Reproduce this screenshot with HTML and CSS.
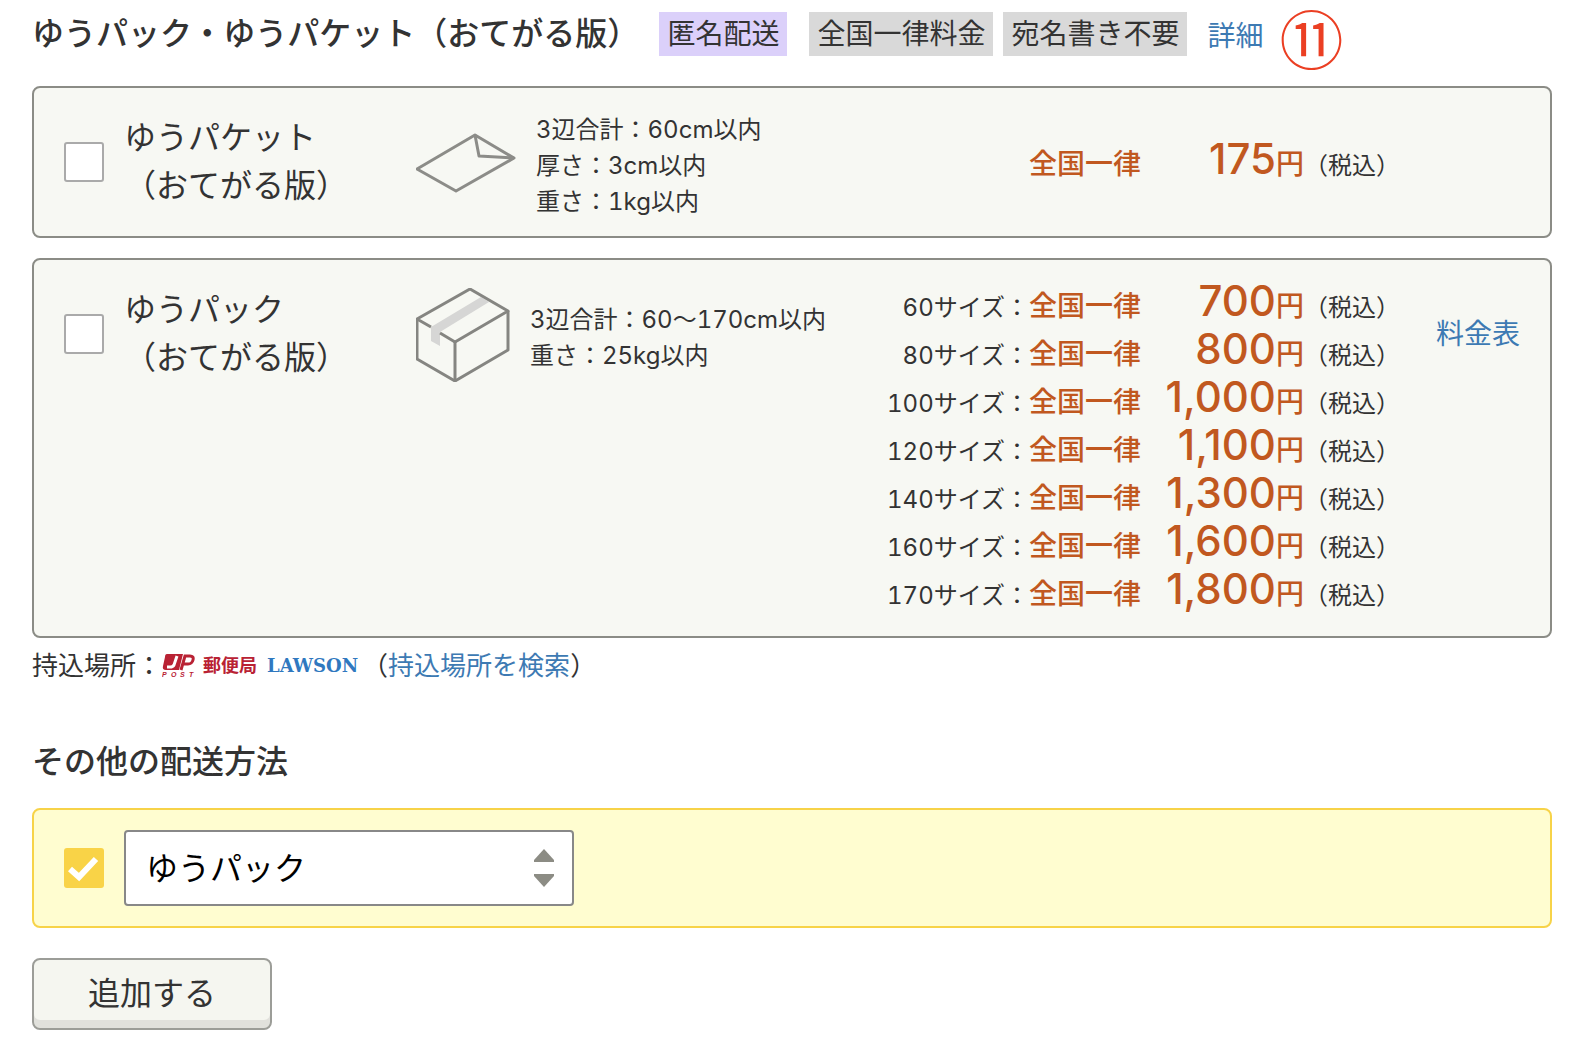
FILE: index.html
```
<!DOCTYPE html>
<html lang="ja">
<head>
  <meta charset="UTF-8">
  <title>配送方法</title>
  <link rel="stylesheet" href="styles.css">
</head>
<body>
  <main class="page">

    <section>
      <div class="heading-row">
        <h2 class="heading">ゆうパック・ゆうパケット（おてがる版）</h2>
        <div class="badges">
          <span class="badge badge-private">匿名配送</span>
          <span class="badge">全国一律料金</span>
          <span class="badge">宛名書き不要</span>
        </div>
        <a class="detail-link" href="#">詳細</a>
        <span class="step">⑪</span>
      </div>

      <div class="card">
        <input class="check" type="checkbox" id="yupacket">
        <label class="name" for="yupacket">ゆうパケット<br>（おてがる版）</label>
        <div class="icon">
          <svg width="100" height="94" viewBox="0 0 100 94" fill="none" stroke="#8c8c88" stroke-width="3" stroke-linejoin="round">
            <path d="M1 53 L59 19 L98 42 L40 75 Z"/>
            <path d="M59 19 L63 40 L98 42"/>
          </svg>
        </div>
        <div class="spec">
          <p>3辺合計：60cm以内<br>厚さ：3cm以内<br>重さ：1kg以内</p>
        </div>
        <table class="prices prices-single">
          <tr><th class="size"></th><td class="flat">全国一律</td><td class="amount"><b>175</b>円</td><td class="tax">（税込）</td></tr>
        </table>
        <div class="more"></div>
      </div>

      <div class="card">
        <input class="check" type="checkbox" id="yupack">
        <label class="name" for="yupack">ゆうパック<br>（おてがる版）</label>
        <div class="icon">
          <svg width="94" height="94" viewBox="0 0 94 94" fill="none" stroke-linejoin="round">
            <path d="M15 39 L65 9 L73 14 L24 44 V58 L15 53 Z" fill="#d6d6d5"/>
            <g stroke="#858581" stroke-width="3">
              <path d="M15 39 L1 31 L54 1 L92 23 L39 54 L24 45"/>
              <path d="M1 31 V71 L39 93 L92 62 V23"/>
              <path d="M39 54 V93"/>
            </g>
          </svg>
        </div>
        <div class="spec">
          <p>3辺合計：60〜170cm以内<br>重さ：25kg以内</p>
        </div>
        <table class="prices">
          <tr><th class="size">60サイズ：</th><td class="flat">全国一律</td><td class="amount"><b>700</b>円</td><td class="tax">（税込）</td></tr>
          <tr><th class="size">80サイズ：</th><td class="flat">全国一律</td><td class="amount"><b>800</b>円</td><td class="tax">（税込）</td></tr>
          <tr><th class="size">100サイズ：</th><td class="flat">全国一律</td><td class="amount"><b>1,000</b>円</td><td class="tax">（税込）</td></tr>
          <tr><th class="size">120サイズ：</th><td class="flat">全国一律</td><td class="amount"><b>1,100</b>円</td><td class="tax">（税込）</td></tr>
          <tr><th class="size">140サイズ：</th><td class="flat">全国一律</td><td class="amount"><b>1,300</b>円</td><td class="tax">（税込）</td></tr>
          <tr><th class="size">160サイズ：</th><td class="flat">全国一律</td><td class="amount"><b>1,600</b>円</td><td class="tax">（税込）</td></tr>
          <tr><th class="size">170サイズ：</th><td class="flat">全国一律</td><td class="amount"><b>1,800</b>円</td><td class="tax">（税込）</td></tr>
        </table>
        <div class="more"><a href="#">料金表</a></div>
      </div>

      <div class="places">
        <span>持込場所：</span>
        <svg class="jp-logo" width="33" height="24" viewBox="0 0 33 24">
          <path d="M5 0 H21 L17 16 H4 Q0 16 1 12 L3 3 Q3 0 5 0 Z" fill="#b92234"/>
          <path d="M15 2 L12 11 Q11 13 8 13 H5" fill="none" stroke="#fff" stroke-width="3"/>
          <path d="M19 16 L23 2 H28 Q32 2 31 6 Q30 10 26 10 H21" fill="none" stroke="#b92234" stroke-width="3"/>
          <text class="jp-post" x="0 9 18 27" y="23">POST</text>
        </svg>
        <span class="post-office">郵便局</span>
        <span class="lawson">LAWSON</span>
        <span>（<a href="#">持込場所を検索</a>）</span>
      </div>
    </section>

    <section>
      <h2 class="heading heading-other">その他の配送方法</h2>
      <div class="card card-selected">
        <input class="check" type="checkbox" id="other" aria-label="その他の配送方法を使う" checked>
        <select class="method" aria-label="配送方法">
          <option>ゆうパック</option>
        </select>
        <svg class="arrows" width="20" height="38" viewBox="0 0 20 38" fill="#8c8c84">
          <path d="M10 0 L20 11 V13 H0 V11 Z"/>
          <path d="M10 38 L20 27 V25 H0 V27 Z"/>
        </svg>
      </div>
      <button class="add" type="button">追加する</button>
    </section>

  </main>
</body>
</html>
```
FILE: styles.css
```
* {
  box-sizing: border-box;
}

body {
  margin: 0;
  background: #fff;
  color: #333;
  font-family: Inter, "Noto Sans CJK JP", sans-serif;
  font-size: 24px;
  font-variant-numeric: tabular-nums;
}

a {
  color: #3d7ab3;
  text-decoration: none;
}

.page {
  padding: 12px 34px 32px 32px;
}

/* 見出し */
.heading-row {
  display: flex;
  align-items: flex-start;
  height: 74px;
}

.heading {
  margin: 0;
  font-size: 32px;
  font-weight: 500;
  line-height: 44px;
  white-space: nowrap;
}

.badges {
  display: flex;
  gap: 10px;
  margin-left: 20px;
}

.badge {
  padding: 0 8px;
  background: #d9d9d9;
  font-size: 28px;
  line-height: 44px;
  white-space: nowrap;
}

.badge-private {
  margin-right: 12px;
  background: #dbd0fa;
}

.detail-link {
  margin-left: 20px;
  font-size: 28px;
  line-height: 48px;
}

.step {
  margin-left: 16px;
  color: #eb3f23;
  font-family: "Noto Sans CJK JP", sans-serif;
  font-size: 64px;
  line-height: 48px;
}

/* 配送方法のカード */
.card {
  display: flex;
  align-items: flex-start;
  padding: 20px 30px 14px;
  margin-bottom: 20px;
  background: #f7f8f3;
  border: 2px solid #8b8c86;
  border-radius: 8px;
}

.check {
  appearance: none;
  flex: none;
  width: 40px;
  height: 40px;
  margin: 34px 20px 0 0;
  background: #fff;
  border: 2px solid #aaa;
  border-radius: 3px;
}

.name {
  flex: none;
  width: 292px;
  padding-top: 6px;
  font-size: 32px;
  line-height: 48px;
}

.icon {
  flex: none;
  padding: 8px 20px 0 0;
}

.icon svg {
  display: block;
}

.spec {
  display: flex;
  flex: 1;
  align-items: center;
  height: 114px;
  padding: 4px 0 2px;
  line-height: 36px;
}

.spec p {
  margin: 0;
}

.more {
  flex: none;
  width: 120px;
  padding-top: 34px;
  font-size: 28px;
  line-height: 40px;
  text-align: right;
}

.prices {
  flex: none;
  margin-top: 6px;
  border-collapse: collapse;
  white-space: nowrap;
}

.prices-single {
  margin-top: 36px;
}

.prices th,
.prices td {
  height: 48px;
  padding: 0;
  font-weight: 400;
  line-height: 30px;
  vertical-align: baseline;
}

.prices .size {
  text-align: right;
}

.prices .flat,
.prices .amount {
  color: #c1581f;
  font-size: 28px;
  font-weight: 500;
}

.prices .flat {
  width: 112px;
}

.prices .amount {
  width: 163px;
  font-variant-numeric: normal;
  text-align: right;
}

.amount b {
  font-size: 42px;
  font-weight: 500;
}

/* 持込場所 */
.places {
  display: flex;
  align-items: center;
  margin-top: -12px;
  font-size: 26px;
  line-height: 40px;
}

.jp-logo {
  margin-right: 8px;
}

.jp-post {
  fill: #b92234;
  font: italic bold 7px "Liberation Sans", sans-serif;
}

.post-office {
  margin-right: 10px;
  color: #b92234;
  font-size: 18px;
  font-weight: 700;
}

.lawson {
  margin-right: 4px;
  color: #2f78bf;
  font-family: "DejaVu Serif", serif;
  font-size: 18px;
  font-weight: 700;
}

/* その他の配送方法 */
.heading-other {
  margin: 54px 0 24px;
}

.card-selected {
  align-items: center;
  padding-bottom: 20px;
  margin-bottom: 30px;
  background: #fffdd0;
  border-color: #f7d348;
}

.card-selected .check {
  margin-top: 0;
}

.check:checked {
  border: 0;
  background: #f9d347 url("data:image/svg+xml,%3Csvg xmlns='http://www.w3.org/2000/svg' viewBox='0 0 40 40'%3E%3Cpath d='M6 21 L15 29 L32 11' fill='none' stroke='%23fff' stroke-width='6'/%3E%3C/svg%3E") center / 40px 40px;
}

.method {
  appearance: none;
  width: 450px;
  height: 76px;
  padding: 0 60px 0 20px;
  background: #fff;
  border: 2px solid #888;
  border-radius: 4px;
  color: #000;
  font-family: inherit;
  font-size: 32px;
}

/* 矢印はセレクトの右端に重ねる */
.arrows {
  margin-left: -40px;
  pointer-events: none;
}

.add {
  display: block;
  width: 240px;
  height: 72px;
  padding: 0 0 6px;
  background: #f5f6f0;
  border: 2px solid #9c9d98;
  border-radius: 8px;
  box-shadow: inset 0 -8px 0 #e1e1dc;
  color: #333;
  font-family: inherit;
  font-size: 32px;
}
```
